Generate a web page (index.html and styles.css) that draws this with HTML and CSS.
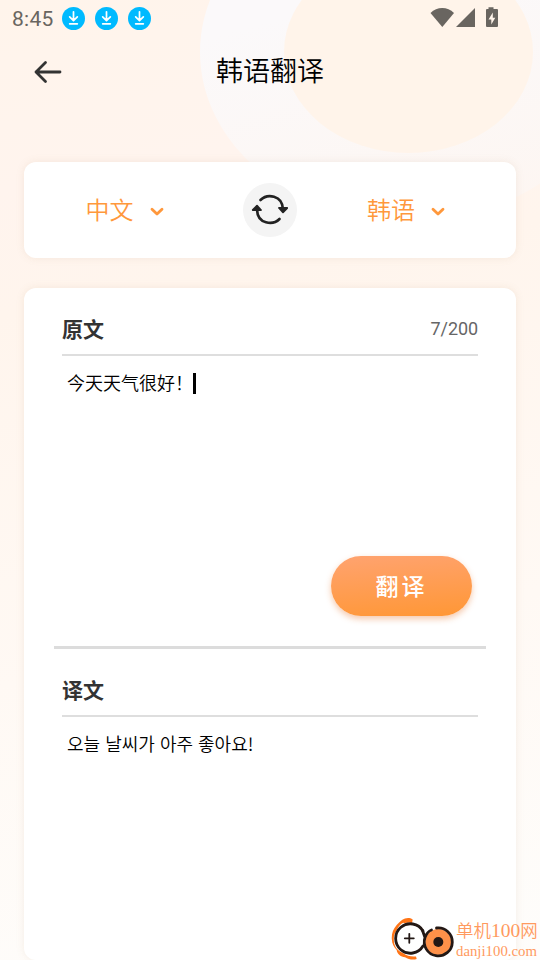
FILE: index.html
```html
<!DOCTYPE html>
<html lang="zh-CN">

<head>
    <meta charset="UTF-8">
    <meta name="viewport" content="width=device-width, initial-scale=1.0">
    <title>韩语翻译</title>
    <link rel="stylesheet" href="styles.css">
</head>

<body>
    <div class="backdrop">
        <div class="ring"></div>
        <div class="disc"></div>
    </div>

    <div class="screen">
        <div class="status-bar">
            <span class="time">8:45</span>
            <div class="notifications">
                <svg class="download" viewBox="0 0 24 24"><circle cx="12" cy="12" r="12" /><path d="M12 5v9M8 10.300 12 14.200l4-3.900M8 17.500h8" /></svg>
                <svg class="download" viewBox="0 0 24 24"><circle cx="12" cy="12" r="12" /><path d="M12 5v9M8 10.300 12 14.200l4-3.900M8 17.500h8" /></svg>
                <svg class="download" viewBox="0 0 24 24"><circle cx="12" cy="12" r="12" /><path d="M12 5v9M8 10.300 12 14.200l4-3.900M8 17.500h8" /></svg>
            </div>
            <svg class="system" width="68" height="22" viewBox="0 0 68 22">
                <path d="M0.500 6C7 -0.700 17.500 -0.700 24 6L12.300 20Z" />
                <path d="M26 20 45 1V20Z" />
                <path d="M58.500 0.200h5v1.800h3.500q1 0 1 1V19q0 1-1 1H57q-1 0-1-1V3q0-1 1-1h1.500z" />
                <path class="bolt" d="M62.800 5.500 58.500 12.500h2.800V17.500L65.300 10.700h-2.500z" />
            </svg>
        </div>

        <header>
            <svg class="back" width="30" height="26" viewBox="0 0 30 26"><path d="M12.500 3.500 3 13l9.500 9.500M3 13h24" /></svg>
            <h1>韩语翻译</h1>
        </header>

        <div class="card languages">
            <div class="language from">
                <span>中文</span>
                <svg width="14" height="10" viewBox="0 0 14 10"><path d="M2 2.200 7 7 12 2.200" /></svg>
            </div>
            <button class="swap" aria-label="交换语言">
                <svg width="54" height="54" viewBox="0 0 54 54">
                    <path class="arc" d="M17.500 17C24 10.500 39.500 11.500 40 26.500M36.500 36C30 42.500 14.500 41.500 14 26.500" />
                    <path class="head" d="M36 25h8.200L40 29.300zM9.800 27h8.200L14 22.700z" />
                </svg>
            </button>
            <div class="language">
                <span>韩语</span>
                <svg width="14" height="10" viewBox="0 0 14 10"><path d="M2 2.200 7 7 12 2.200" /></svg>
            </div>
        </div>

        <div class="card translator">
            <section class="source">
                <div class="section-head">
                    <h2>原文</h2>
                    <span class="count">7/200</span>
                </div>
                <div class="text">今天天气很好！<i class="cursor"></i></div>
                <button class="translate">翻译</button>
            </section>
            <section class="result">
                <div class="section-head">
                    <h2>译文</h2>
                </div>
                <div class="text korean" lang="ko">오늘 날씨가 아주 좋아요!</div>
            </section>
        </div>
    </div>

    <div class="watermark">
        <svg width="64" height="42" viewBox="0 0 64 42">
            <path class="swoosh" d="M21.700 1.500C19 -0.500 16 0 14 .5C10 2 8 4.500 5.700 7C2 11 .5 16 .8 21C1 26 3 29 5.700 32C6 36 10 39 14 39.300C18 42 23 42 25.700 41L25 38.500C20 39 16 38 12.300 35.300C7 33 3.500 29 3 24C2.500 19 3 16 5 13.500C7 9 9 6 12.300 4.700C15 5.500 18 3.500 21 5.200z" />
            <path class="wheel" d="M32 13A14.700 14.700 0 1 0 32 28" />
            <path class="plus" d="M18.300 15.800v9M13.800 20.300h9" />
            <circle class="disc-fill" cx="47.300" cy="24" r="13" />
            <path class="disc-line" d="M45.500 10A14 14 0 1 1 34 19.500C35.500 15.500 37.500 13 40.500 12M31.500 12.500 34 19.500" />
            <circle class="hole" cx="47.300" cy="24" r="5" />
        </svg>
        <div class="watermark-text">
            <div class="site">单机<span>100</span>网</div>
            <div class="domain">danji100.com</div>
        </div>
    </div>
</body>

</html>
```

FILE: styles.css
```css
* {
    box-sizing: border-box;
}

body {
    margin: 0;
    height: 960px;
    position: relative;
    overflow: hidden;
    font-family: "Noto Sans CJK SC", sans-serif;
    color: #000;
    background: linear-gradient(170deg, #fff4eb 0%, #fff4ee 18%, #fff5ed 30%, #fff9f4 65%, #fefdfb 100%);
}

h1,
h2 {
    margin: 0;
}

button {
    border: none;
    padding: 0;
    font-family: inherit;
    cursor: pointer;
}

svg {
    display: block;
    fill: none;
    stroke-linecap: round;
    stroke-linejoin: round;
}

/* Pale circles behind the header */
.backdrop {
    position: absolute;
    inset: 0;
    overflow: hidden;
}

.ring,
.disc {
    position: absolute;
    border-radius: 50%;
}

.ring {
    left: 200px;
    top: -118px;
    width: 416px;
    height: 340px;
    background: linear-gradient(165deg, #fbf9fa 35%, #fdf6f2 90%);
}

.disc {
    left: 284px;
    top: -49px;
    width: 249px;
    height: 202px;
    background: #fff4ea;
}

.screen {
    position: relative;
    height: 960px;
    display: flex;
    flex-direction: column;
    padding: 0 24px;
}

.status-bar {
    display: flex;
    align-items: center;
    height: 37px;
    margin: 0 18px 0 -12px;
}

.time {
    width: 50px;
    font-family: Roboto, sans-serif;
    font-size: 21px;
    letter-spacing: 0.3px;
    color: #696560;
}

.notifications {
    display: flex;
    gap: 10px;
}

.download {
    width: 23px;
    height: 23px;
    stroke: #fff;
    stroke-width: 1.8;
}

.download circle {
    fill: #00baff;
    stroke: none;
}

.system {
    margin-left: auto;
    margin-bottom: 1px;
    fill: #696560;
}

.system .bolt {
    fill: #fff4ea;
}

header {
    display: flex;
    align-items: center;
    justify-content: center;
    height: 70px;
    margin-bottom: 55px;
}

.back {
    width: 30px;
    margin-left: 9px;
    margin-right: auto;
    stroke: #333;
    stroke-width: 2.8;
}

h1 {
    margin-right: auto;
    padding: 0 39px 4px 0;
    font-size: 27px;
    font-weight: 350;
    line-height: 40px;
}

.card {
    background: #fff;
    border-radius: 12px;
    box-shadow: 0 0 8px rgba(170, 130, 90, 0.12);
}

.languages {
    display: flex;
    align-items: center;
    flex: 0 0 96px;
    margin-bottom: 30px;
}

.language {
    width: 219px;
    display: flex;
    align-items: center;
    justify-content: center;
    gap: 16px;
    padding-right: 1px;
    font-size: 24px;
    font-weight: 350;
    line-height: 34px;
    color: #ff983c;
}

.language.from {
    padding-right: 18px;
}

.language span {
    margin-bottom: 2px;
}

.language svg {
    stroke: #ff983c;
    stroke-width: 2.8;
    margin-top: 3px;
}

.swap {
    width: 54px;
    height: 54px;
    border-radius: 50%;
    background: #f4f4f4;
}

.swap .arc {
    stroke: #222;
    stroke-width: 2.7;
}

.swap .head {
    fill: #222;
    stroke: #222;
    stroke-width: 1.8;
}

.translator {
    flex: 0 0 672px;
    padding: 0 30px;
}

.source,
.result {
    padding: 0 8px;
}

.source {
    display: flex;
    flex-direction: column;
    height: 361px;
    border-bottom: 3px solid #dcdcdc;
}

.section-head {
    display: flex;
    align-items: center;
    justify-content: space-between;
    height: 68px;
    padding-top: 15px;
    border-bottom: 2px solid #dedede;
}

h2 {
    margin-bottom: 2px;
    font-size: 21px;
    line-height: 30px;
    color: #333;
}

.count {
    font-family: Roboto, sans-serif;
    font-size: 18px;
    letter-spacing: -0.1px;
    color: #666;
}

.text {
    display: flex;
    align-items: center;
    height: 52px;
    padding-left: 5px;
    font-size: 18px;
    font-weight: 350;
}

.korean {
    font-family: "Noto Sans CJK KR", sans-serif;
}

.cursor {
    width: 3px;
    height: 21px;
    margin-top: 2px;
    background: #000;
}

.translate {
    align-self: flex-end;
    width: 141px;
    height: 60px;
    margin: auto 6px 30px 0;
    padding-bottom: 2px;
    border-radius: 30px;
    background: linear-gradient(175deg, #ffa370, #ff9735);
    box-shadow: 0 3px 6px rgba(230, 120, 50, 0.4);
    color: #fff;
    font-size: 23px;
    font-weight: 500;
    letter-spacing: 3px;
}

.watermark {
    position: absolute;
    left: 391px;
    top: 918px;
    display: flex;
    gap: 1px;
    white-space: nowrap;
    font-family: "Liberation Serif", "Noto Sans CJK SC", serif;
    color: #ff9a5e;
}

.swoosh {
    fill: #ff7416;
}

.wheel,
.disc-line {
    stroke: #231815;
    stroke-width: 2.8;
}

.wheel {
    fill: #fff;
}

.plus {
    stroke: #231815;
    stroke-width: 1.8;
}

.disc-fill {
    fill: #ff9149;
}

.hole {
    fill: #231815;
}

.site {
    font-size: 17.5px;
    font-weight: 350;
    line-height: 25px;
}

.site span {
    font-size: 19.500px;
}

.domain {
    font-size: 14.8px;
    line-height: 14px;
}
```
